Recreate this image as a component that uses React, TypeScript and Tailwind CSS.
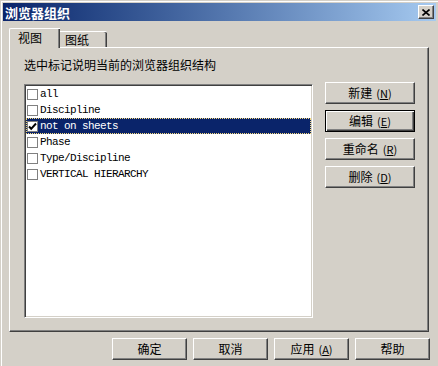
import React from 'react';

interface Item {
  label: string;
  checked: boolean;
  selected?: boolean;
}

const items: Item[] = [
  { label: 'all', checked: false },
  { label: 'Discipline', checked: false },
  { label: 'not on sheets', checked: true, selected: true },
  { label: 'Phase', checked: false },
  { label: 'Type/Discipline', checked: false },
  { label: 'VERTICAL HIERARCHY', checked: false },
];

const cjk = "font-['Noto_Sans_CJK_SC','Noto_Sans',sans-serif]";
const raised =
  'bg-[#d4d0c8] border border-t-white border-l-white border-r-[#404040] border-b-[#404040] shadow-[inset_-1px_-1px_#808080]';
const raisedDefault =
  'bg-[#d4d0c8] border border-black shadow-[inset_1px_1px_#fff,inset_-1px_-1px_#404040,inset_-2px_-2px_#808080]';

function Btn({ text, hot, w, isDefault }: { text: string; hot?: string; w: string; isDefault?: boolean }) {
  return (
    <div
      className={`${isDefault ? raisedDefault : raised} ${w} h-[22px] flex items-center justify-center text-[12px] leading-none text-black ${cjk}`}
    >
      <span>{text}</span>
      {hot && (
        <span className="ml-[4px] text-[11px]">
          (<span className="underline">{hot}</span>)
        </span>
      )}
    </div>
  );
}

function CheckBox({ checked }: { checked: boolean }) {
  return (
    <div className="w-[11px] h-[11px] ml-[1px] bg-white border border-[#808080] flex items-center justify-center shrink-0">
      {checked && (
        <svg width="9" height="9" viewBox="0 0 9 9">
          <path d="M1 4.5 L3.2 6.8 L8 1.5" stroke="#000" strokeWidth="2" fill="none" />
        </svg>
      )}
    </div>
  );
}

export default function App() {
  return (
    <div className="w-[438px] h-[366px] overflow-hidden bg-[#d4d0c8] pl-[1px] pt-[1px]">
      <div className="h-full border-l border-t border-white pl-[1px] pt-[1px] pr-[2px]">
        {/* title bar */}
        <div className="h-[18px] flex items-center justify-between bg-gradient-to-r from-[#0a246a] to-[#a6caf0] pl-[2px] pr-[2px]">
          <span className={`text-white font-bold text-[13px] leading-none ${cjk}`}>浏览器组织</span>
          <div className={`${raised} w-[16px] h-[14px] flex items-center justify-center`}>
            <svg width="8" height="7" viewBox="0 0 8 7">
              <path d="M0.5 0.5 L7.5 6.5 M7.5 0.5 L0.5 6.5" stroke="#000" strokeWidth="1.6" />
            </svg>
          </div>
        </div>

        <div className="pl-[6px]">
          {/* tabs */}
          <div className="flex items-end h-[19px] mt-[7px] relative z-10">
            <div
              className={`w-[51px] h-[20px] -mb-[1px] bg-[#d4d0c8] border-l border-t border-white rounded-tl-[2px] shadow-[inset_-1px_0_#404040,inset_-2px_0_#808080] pl-[8px] pt-[3px] text-[12px] leading-none ${cjk}`}
            >
              视图
            </div>
            <div
              className={`w-[47px] h-[16px] bg-[#d4d0c8] border-t border-white rounded-tr-[2px] shadow-[inset_-1px_0_#404040,inset_-2px_0_#808080] pl-[5px] pt-[2px] text-[12px] leading-none ${cjk}`}
            >
              图纸
            </div>
          </div>

          {/* panel */}
          <div className="w-[420px] h-[285px] border border-t-white border-l-white border-r-[#404040] border-b-[#404040] shadow-[inset_-1px_-1px_#808080] pl-[14px] pt-[10px]">
            <div className={`text-[12px] leading-[14px] text-black ${cjk}`}>选中标记说明当前的浏览器组织结构</div>
            <div className="flex items-start mt-[12px]">
              <div className="w-[289px] h-[234px] bg-white border border-t-[#808080] border-l-[#808080] border-r-white border-b-white shadow-[inset_1px_1px_#404040,inset_-1px_-1px_#d4d0c8] p-[1px]">
                {items.map((it) => (
                  <div
                    key={it.label}
                    className={`h-[16px] flex items-center gap-[2px] font-['Liberation_Mono',monospace] text-[11px] tracking-[-0.6px] leading-none ${
                      it.selected
                        ? 'bg-[#0a246a] text-white outline-1 outline-dotted outline-[#f6db7e] -outline-offset-1'
                        : 'text-black'
                    }`}
                  >
                    <CheckBox checked={it.checked} />
                    <span>{it.label}</span>
                  </div>
                ))}
              </div>
              <div className="flex flex-col gap-[6px] ml-[12px] -mt-[2px]">
                <Btn text="新建" hot="N" w="w-[90px]" />
                <Btn text="编辑" hot="E" w="w-[90px]" isDefault />
                <Btn text="重命名" hot="R" w="w-[90px]" />
                <Btn text="删除" hot="D" w="w-[90px]" />
              </div>
            </div>
          </div>

          {/* bottom buttons */}
          <div className="w-[421px] flex justify-end gap-[6px] mt-[6px]">
            <Btn text="确定" w="w-[75px]" />
            <Btn text="取消" w="w-[75px]" />
            <Btn text="应用" hot="A" w="w-[75px]" />
            <Btn text="帮助" w="w-[75px]" />
          </div>
        </div>
      </div>
    </div>
  );
}
